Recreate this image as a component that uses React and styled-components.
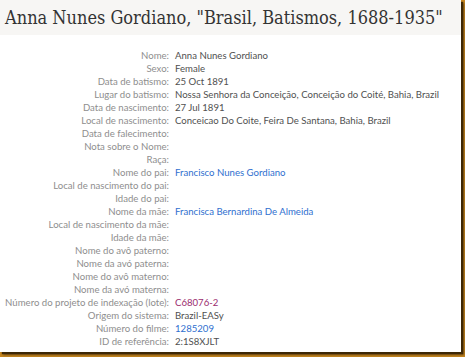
import React from "react";
import styled, { createGlobalStyle } from "styled-components";

const Global = createGlobalStyle`
  html, body {
    margin: 0;
    padding: 0;
    background: #c58620;
  }
  body {
    width: 465px;
    height: 357px;
    overflow: hidden;
  }
`;

const rows = [
  { label: "Nome", value: "Anna Nunes Gordiano" },
  { label: "Sexo", value: "Female" },
  { label: "Data de batismo", value: "25 Oct 1891" },
  {
    label: "Lugar do batismo",
    value: "Nossa Senhora da Conceição, Conceição do Coité, Bahia, Brazil",
  },
  { label: "Data de nascimento", value: "27 Jul 1891" },
  {
    label: "Local de nascimento",
    value: "Conceicao Do Coite, Feira De Santana, Bahia, Brazil",
  },
  { label: "Data de falecimento" },
  { label: "Nota sobre o Nome" },
  { label: "Raça" },
  { label: "Nome do pai", value: "Francisco Nunes Gordiano", link: "blue" },
  { label: "Local de nascimento do pai" },
  { label: "Idade do pai" },
  {
    label: "Nome da mãe",
    value: "Francisca Bernardina De Almeida",
    link: "blue",
  },
  { label: "Local de nascimento da mãe" },
  { label: "Idade da mãe" },
  { label: "Nome do avô paterno" },
  { label: "Nome da avó paterna" },
  { label: "Nome do avô materno" },
  { label: "Nome da avó materna" },
  {
    label: "Número do projeto de indexação (lote)",
    value: "C68076-2",
    link: "visited",
  },
  { label: "Origem do sistema", value: "Brazil-EASy" },
  { label: "Número do filme", value: "1285209", link: "blue" },
  { label: "ID de referência", value: "2:1S8XJLT" },
];

export default () => {
  return (
    <>
      <Global />
      <Card>
        <Header>
          <Title>Anna Nunes Gordiano, "Brasil, Batismos, 1688-1935"</Title>
        </Header>
        <Details>
          {rows.map((row, index) => (
            <React.Fragment key={index}>
              <Label>{row.label}:</Label>
              <Value $link={row.link}>{row.value}</Value>
            </React.Fragment>
          ))}
        </Details>
      </Card>
    </>
  );
};

//styling
const Card = styled.div`
  width: 461px;
  height: 352px;
  background: #fff;
  box-shadow: 2px 2px 1px #3d2806, 3px 3px 2px #6b4710;
  overflow: hidden;
`;

const Header = styled.div`
  height: 35px;
  background: #f7f6f4;
  display: flex;
  align-items: center;
  padding-left: 5px;
`;

const Title = styled.h1`
  margin: 0;
  font-family: "DejaVu Serif Condensed", "DejaVu Serif", serif;
  font-stretch: condensed;
  font-weight: normal;
  font-size: 18px;
  color: #333;
  white-space: nowrap;
`;

const Details = styled.div`
  display: grid;
  grid-template-columns: 169px 1fr;
  column-gap: 6px;
  padding-top: 14px;
  grid-auto-rows: 13px;
  font-family: Lato, sans-serif;
  font-size: 9.6px;
  line-height: 13px;
`;

const Label = styled.div`
  text-align: right;
  color: #8e8e8e;
  white-space: nowrap;
`;

const Value = styled.div`
  white-space: nowrap;
  color: ${(p) =>
    p.$link === "blue"
      ? "#2f6fcf"
      : p.$link === "visited"
      ? "#9b2c6e"
      : "#505050"};
`;
